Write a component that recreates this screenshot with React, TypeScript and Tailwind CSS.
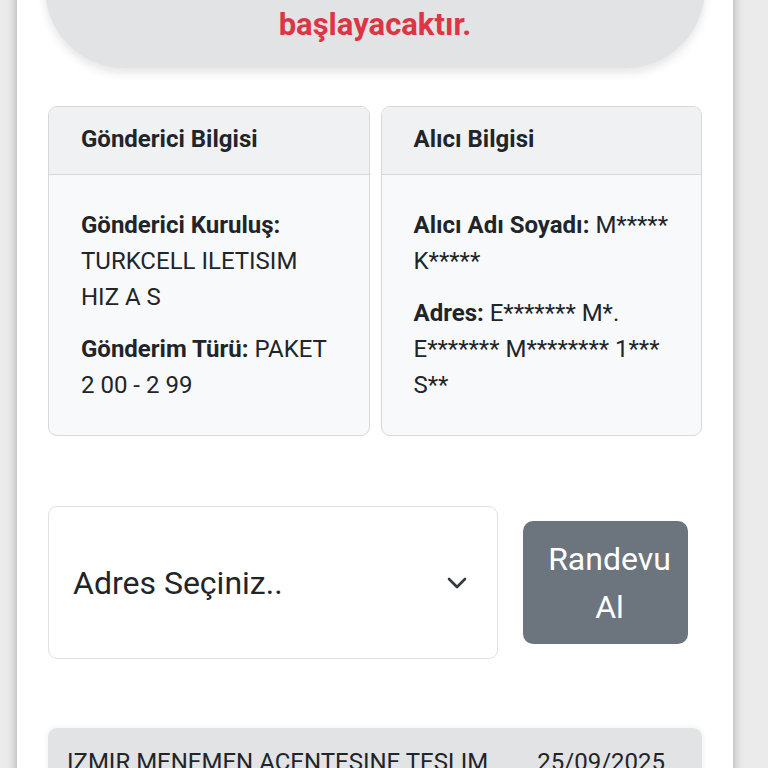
import React from 'react';

const InfoCard: React.FC<{ title: string; children: React.ReactNode }> = ({ title, children }) => (
  <div className="rounded-[9px] border border-[#d6d8db] bg-[#f8f9fa] overflow-hidden">
    <div className="bg-[#f0f1f3] border-b border-[#d6d8db] pl-[32px] pr-4 pt-[14px] pb-[17px] text-[24px] leading-[36px] font-bold">
      {title}
    </div>
    <div className="px-[32px] pt-[32px] pb-[32px] space-y-4 text-[24px] leading-[36px]">{children}</div>
  </div>
);

const App: React.FC = () => {
  return (
    <div className="min-h-screen bg-[#ebebeb] pl-[17px] font-[Roboto,sans-serif] text-[#212529] overflow-hidden">
      <div className="w-[716px] min-h-screen bg-white shadow-[0_0_10px_rgba(0,0,0,0.3)] px-[31px]">
        {/* uyarı bandı */}
        <div className="-mx-[3px] -mt-[40px] pt-[47px] pb-[25px] rounded-b-[80px] bg-[#e2e3e5] shadow-[0_5px_10px_rgba(0,0,0,0.1)] text-center">
          <span className="text-[31px] leading-[36px] font-bold text-[#dc3545]">başlayacaktır.</span>
        </div>

        <div className="mt-[38px] grid grid-cols-2 gap-[11px]">
          <InfoCard title="Gönderici Bilgisi">
            <p>
              <b>Gönderici Kuruluş:</b> TURKCELL ILETISIM HIZ A S
            </p>
            <p>
              <b>Gönderim Türü:</b> PAKET 2 00 - 2 99
            </p>
          </InfoCard>
          <InfoCard title="Alıcı Bilgisi">
            <p>
              <b>Alıcı Adı Soyadı:</b> M***** K*****
            </p>
            <p>
              <b>Adres:</b> E******* M*. E******* M******** 1*** S**
            </p>
          </InfoCard>
        </div>

        <div className="mt-[70px] flex items-center gap-[25px]">
          <div className="w-[450px] h-[153px] rounded-[9px] border border-[#dee2e6] bg-white flex items-center justify-between pl-[24px] pr-[30px]">
            <span className="text-[32px] leading-[48px]">Adres Seçiniz..</span>
            <svg width="20" height="12" viewBox="0 0 20 12" fill="none">
              <path d="M2 2l8 8 8-8" stroke="#343a40" strokeWidth="2.6" strokeLinecap="round" strokeLinejoin="round" />
            </svg>
          </div>
          <button className="w-[165px] h-[123px] rounded-[10px] bg-[#6c757d] text-white text-[32px] leading-[48px] pl-[22px] pr-[14px] text-center">
            Randevu Al
          </button>
        </div>

        <div className="mt-[69px] rounded-t-[9px] bg-[#e2e3e5] shadow-[0_0_6px_rgba(0,0,0,0.08)] flex justify-between pl-[19px] pr-[37px] pt-[16px] pb-[16px] text-[24px] leading-[36px]">
          <span>IZMIR MENEMEN ACENTESINE TESLIM</span>
          <span>25/09/2025</span>
        </div>
      </div>
    </div>
  );
};

export default App;
